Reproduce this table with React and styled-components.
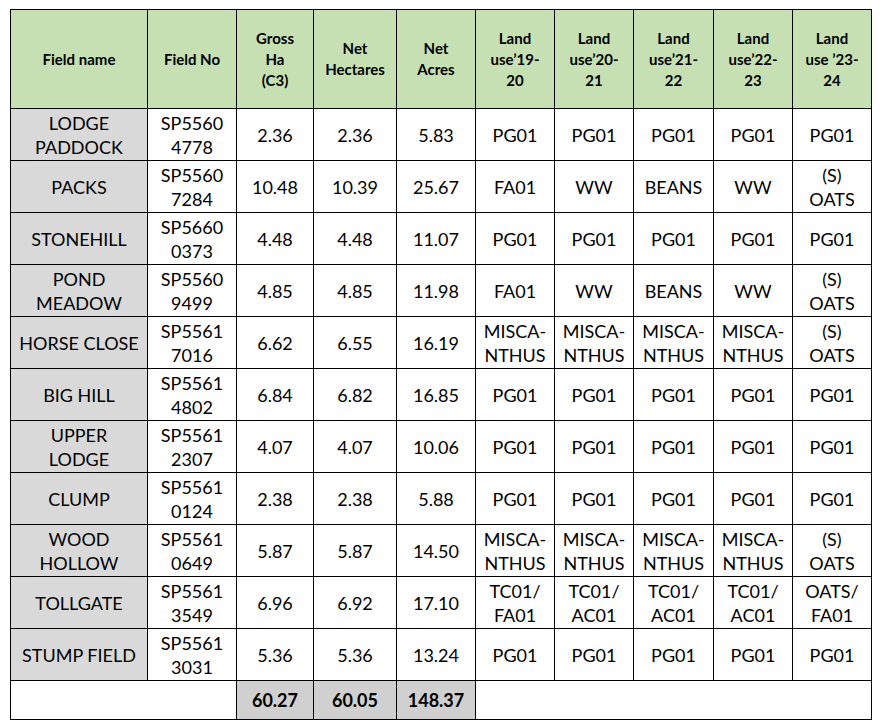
import React from "react";
import styled, { createGlobalStyle } from "styled-components";

const GlobalStyle = createGlobalStyle`
  body {
    margin: 0;
    background: #ffffff;
  }
`;

const Page = styled.div`
  padding: 9px 0 0 10px;
  font-family: "Lato", "Liberation Sans", sans-serif;
  color: #000;
`;

const Table = styled.table`
  border-collapse: collapse;
  table-layout: fixed;
  width: 862px;
`;

const HeadCell = styled.th`
  background: #c6e0b4;
  border: 1px solid #000;
  height: 98px;
  padding: 0 4px;
  font-size: 15px;
  font-weight: 700;
  line-height: 21px;
  text-align: center;
  vertical-align: middle;
`;

const Row = styled.tr`
  height: ${(p) => (p.$total ? "39px" : "52px")};
`;

const Cell = styled.td`
  border: 1px solid #000;
  padding: 0 2px;
  font-size: 18px;
  line-height: 24px;
  text-align: center;
  vertical-align: middle;
  white-space: nowrap;
  background: ${(p) => (p.$grey ? "#d9d9d9" : "#ffffff")};
`;

const TotalCell = styled(Cell)`
  background: #d0d0d0;
  font-weight: 700;
`;

const widths = [137, 89, 77, 83, 79, 79, 79, 80, 79, 79];

const headers = [
  ["Field name"],
  ["Field No"],
  ["Gross", "Ha", "(C3)"],
  ["Net", "Hectares"],
  ["Net", "Acres"],
  ["Land", "use’19-", "20"],
  ["Land", "use’20-", "21"],
  ["Land", "use’21-", "22"],
  ["Land", "use’22-", "23"],
  ["Land", "use ’23-", "24"],
];

const M = ["MISCA-", "NTHUS"];
const SO = ["(S)", "OATS"];

const rows = [
  [["LODGE", "PADDOCK"], ["SP5560", "4778"], "2.36", "2.36", "5.83", "PG01", "PG01", "PG01", "PG01", "PG01"],
  ["PACKS", ["SP5560", "7284"], "10.48", "10.39", "25.67", "FA01", "WW", "BEANS", "WW", SO],
  ["STONEHILL", ["SP5660", "0373"], "4.48", "4.48", "11.07", "PG01", "PG01", "PG01", "PG01", "PG01"],
  [["POND", "MEADOW"], ["SP5560", "9499"], "4.85", "4.85", "11.98", "FA01", "WW", "BEANS", "WW", SO],
  ["HORSE CLOSE", ["SP5561", "7016"], "6.62", "6.55", "16.19", M, M, M, M, SO],
  ["BIG HILL", ["SP5561", "4802"], "6.84", "6.82", "16.85", "PG01", "PG01", "PG01", "PG01", "PG01"],
  [["UPPER", "LODGE"], ["SP5561", "2307"], "4.07", "4.07", "10.06", "PG01", "PG01", "PG01", "PG01", "PG01"],
  ["CLUMP", ["SP5561", "0124"], "2.38", "2.38", "5.88", "PG01", "PG01", "PG01", "PG01", "PG01"],
  [["WOOD", "HOLLOW"], ["SP5561", "0649"], "5.87", "5.87", "14.50", M, M, M, M, SO],
  ["TOLLGATE", ["SP5561", "3549"], "6.96", "6.92", "17.10", ["TC01/", "FA01"], ["TC01/", "AC01"], ["TC01/", "AC01"], ["TC01/", "AC01"], ["OATS/", "FA01"]],
  ["STUMP FIELD", ["SP5561", "3031"], "5.36", "5.36", "13.24", "PG01", "PG01", "PG01", "PG01", "PG01"],
];

function Lines({ value }) {
  const parts = Array.isArray(value) ? value : [value];
  return parts.map((part, i) => (
    <React.Fragment key={i}>
      {i > 0 && <br />}
      {part}
    </React.Fragment>
  ));
}

export default function App() {
  return (
    <Page>
      <GlobalStyle />
      <Table>
        <colgroup>
          {widths.map((w, i) => (
            <col key={i} style={{ width: w }} />
          ))}
        </colgroup>
        <thead>
          <tr>
            {headers.map((h, i) => (
              <HeadCell key={i}>
                <Lines value={h} />
              </HeadCell>
            ))}
          </tr>
        </thead>
        <tbody>
          {rows.map((r, i) => (
            <Row key={i}>
              {r.map((v, j) => (
                <Cell key={j} $grey={j === 0}>
                  <Lines value={v} />
                </Cell>
              ))}
            </Row>
          ))}
          <Row $total>
            <Cell colSpan={2} />
            <TotalCell>60.27</TotalCell>
            <TotalCell>60.05</TotalCell>
            <TotalCell>148.37</TotalCell>
            <Cell colSpan={5} />
          </Row>
        </tbody>
      </Table>
    </Page>
  );
}
